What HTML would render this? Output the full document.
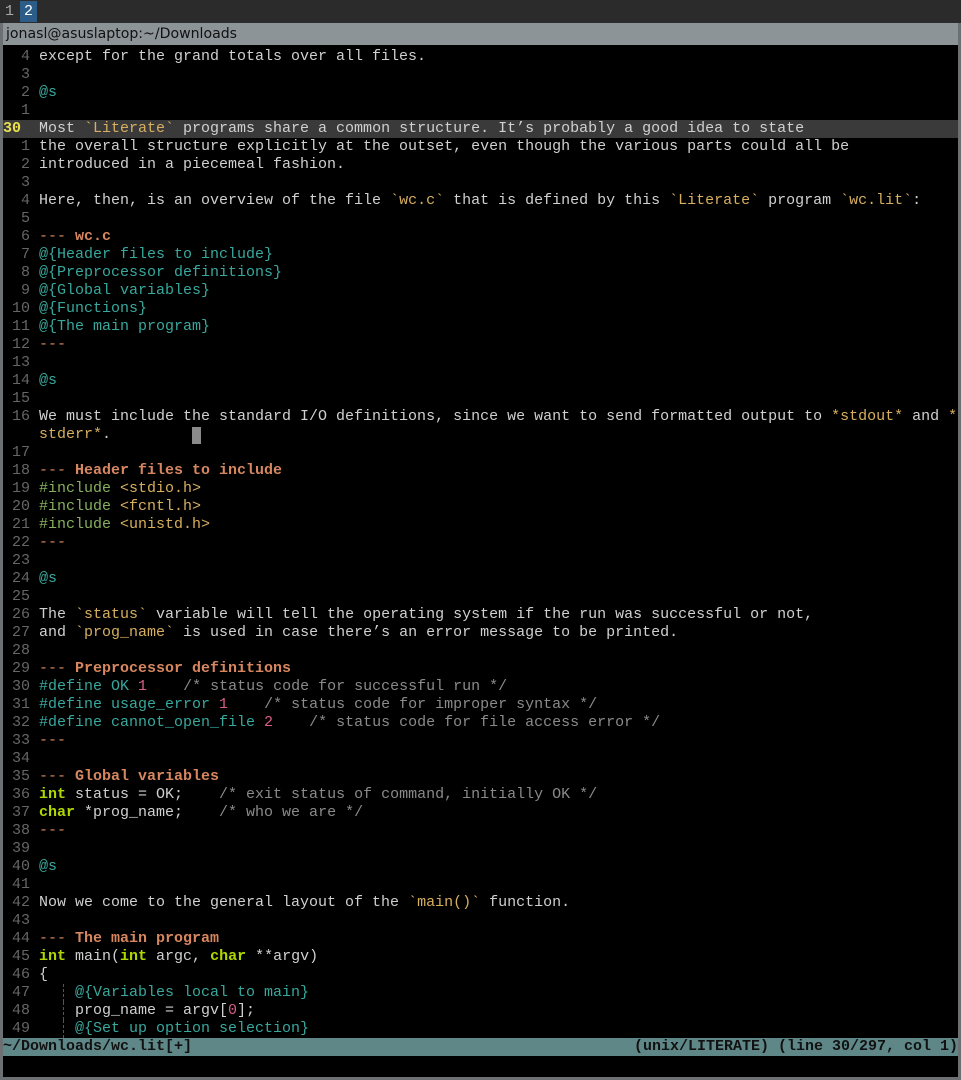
<!DOCTYPE html>
<html><head><meta charset="utf-8"><style>
body{margin:0;width:961px;height:1080px;background:#000;overflow:hidden;font-family:"Liberation Mono",monospace;font-size:15px;}
#tabs{position:absolute;left:0;top:0;width:961px;height:23px;background:#2b2b2b;}
.tab{position:absolute;top:1px;height:21px;width:17px;color:#aaa;font-family:"Liberation Mono",monospace;font-size:15px;line-height:21px;text-align:center}
#frame{position:absolute;left:0;top:23px;width:961px;height:1057px;background:#6c7073;}
#title{position:absolute;left:3px;top:23px;width:955px;height:22px;background:#8d9498;color:#111;font-family:"DejaVu Sans",sans-serif;font-size:14.1px;line-height:22px;padding-left:3px;box-sizing:border-box}
#term{position:absolute;left:3px;top:45px;width:955px;height:1032px;background:#000;}
#ed{position:absolute;left:3px;top:48px;width:955px;}
.l{height:18px;line-height:18px;white-space:pre;color:#d0d0d0;position:relative}
.n{display:inline-block;width:27px;text-align:right;color:#666;margin-right:9px}
.cur{background:#3a3a3a}
.cur .n{color:#e8e050;font-weight:bold;text-align:left;width:27px}
.s{color:#d7af5f}.t{color:#38a89d}.h{color:#d7875f;font-weight:bold}.d{color:#d7875f}
.g{color:#87af5f}.m{color:#d75f87}.c{color:#8a8a8a}.k{color:#afd700;font-weight:bold}.e{color:#d7af5f}
.ig{position:absolute;left:60px;top:0;height:18px;border-left:1px dashed #555}
#st{position:absolute;left:3px;top:1038px;width:955px;height:18px;line-height:18px;background:#5f8787;color:#111;font-weight:bold;white-space:pre;display:flex;justify-content:space-between}
#cursor{position:absolute;left:192px;top:427px;width:9px;height:17px;background:#8a8a8a}
</style></head><body>
<div id="tabs"><div class="tab" style="left:1px">1</div><div class="tab" style="left:20px;background:#2c5d88;color:#fff">2</div></div>
<div id="frame"></div>
<div id="title">jonasl@asuslaptop:~/Downloads</div>
<div id="term"></div>
<div id="ed">
<div class="l"><span class="n">4</span>except for the grand totals over all files.</div>
<div class="l"><span class="n">3</span></div>
<div class="l"><span class="n">2</span><span class="t">@s</span></div>
<div class="l"><span class="n">1</span></div>
<div class="l cur"><span class="n">30</span>Most <span class="s">`Literate`</span> programs share a common structure. It’s probably a good idea to state</div>
<div class="l"><span class="n">1</span>the overall structure explicitly at the outset, even though the various parts could all be</div>
<div class="l"><span class="n">2</span>introduced in a piecemeal fashion.</div>
<div class="l"><span class="n">3</span></div>
<div class="l"><span class="n">4</span>Here, then, is an overview of the file <span class="s">`wc.c`</span> that is defined by this <span class="s">`Literate`</span> program <span class="s">`wc.lit`</span>:</div>
<div class="l"><span class="n">5</span></div>
<div class="l"><span class="n">6</span><span class="d">--- </span><span class="h">wc.c</span></div>
<div class="l"><span class="n">7</span><span class="t">@{Header files to include}</span></div>
<div class="l"><span class="n">8</span><span class="t">@{Preprocessor definitions}</span></div>
<div class="l"><span class="n">9</span><span class="t">@{Global variables}</span></div>
<div class="l"><span class="n">10</span><span class="t">@{Functions}</span></div>
<div class="l"><span class="n">11</span><span class="t">@{The main program}</span></div>
<div class="l"><span class="n">12</span><span class="d">---</span></div>
<div class="l"><span class="n">13</span></div>
<div class="l"><span class="n">14</span><span class="t">@s</span></div>
<div class="l"><span class="n">15</span></div>
<div class="l"><span class="n">16</span>We must include the standard I/O definitions, since we want to send formatted output to <span class="e">*stdout*</span> and <span class="e">*</span></div>
<div class="l"><span class="n"></span><span class="e">stderr*</span>.</div>
<div class="l"><span class="n">17</span></div>
<div class="l"><span class="n">18</span><span class="d">--- </span><span class="h">Header files to include</span></div>
<div class="l"><span class="n">19</span><span class="g">#include </span><span class="s">&lt;stdio.h&gt;</span></div>
<div class="l"><span class="n">20</span><span class="g">#include </span><span class="s">&lt;fcntl.h&gt;</span></div>
<div class="l"><span class="n">21</span><span class="g">#include </span><span class="s">&lt;unistd.h&gt;</span></div>
<div class="l"><span class="n">22</span><span class="d">---</span></div>
<div class="l"><span class="n">23</span></div>
<div class="l"><span class="n">24</span><span class="t">@s</span></div>
<div class="l"><span class="n">25</span></div>
<div class="l"><span class="n">26</span>The <span class="s">`status`</span> variable will tell the operating system if the run was successful or not,</div>
<div class="l"><span class="n">27</span>and <span class="s">`prog_name`</span> is used in case there’s an error message to be printed.</div>
<div class="l"><span class="n">28</span></div>
<div class="l"><span class="n">29</span><span class="d">--- </span><span class="h">Preprocessor definitions</span></div>
<div class="l"><span class="n">30</span><span class="t">#define OK </span><span class="m">1</span>    <span class="c">/* status code for successful run */</span></div>
<div class="l"><span class="n">31</span><span class="t">#define usage_error </span><span class="m">1</span>    <span class="c">/* status code for improper syntax */</span></div>
<div class="l"><span class="n">32</span><span class="t">#define cannot_open_file </span><span class="m">2</span>    <span class="c">/* status code for file access error */</span></div>
<div class="l"><span class="n">33</span><span class="d">---</span></div>
<div class="l"><span class="n">34</span></div>
<div class="l"><span class="n">35</span><span class="d">--- </span><span class="h">Global variables</span></div>
<div class="l"><span class="n">36</span><span class="k">int</span> status = OK;    <span class="c">/* exit status of command, initially OK */</span></div>
<div class="l"><span class="n">37</span><span class="k">char</span> *prog_name;    <span class="c">/* who we are */</span></div>
<div class="l"><span class="n">38</span><span class="d">---</span></div>
<div class="l"><span class="n">39</span></div>
<div class="l"><span class="n">40</span><span class="t">@s</span></div>
<div class="l"><span class="n">41</span></div>
<div class="l"><span class="n">42</span>Now we come to the general layout of the <span class="s">`main()`</span> function.</div>
<div class="l"><span class="n">43</span></div>
<div class="l"><span class="n">44</span><span class="d">--- </span><span class="h">The main program</span></div>
<div class="l"><span class="n">45</span><span class="k">int</span> main(<span class="k">int</span> argc, <span class="k">char</span> **argv)</div>
<div class="l"><span class="n">46</span>{</div>
<div class="l"><span class="n">47</span><span class="ig"></span>    <span class="t">@{Variables local to main}</span></div>
<div class="l"><span class="n">48</span><span class="ig"></span>    prog_name = argv[<span class="m">0</span>];</div>
<div class="l"><span class="n">49</span><span class="ig"></span>    <span class="t">@{Set up option selection}</span></div>
</div>
<div id="cursor"></div>
<div id="st"><span>~/Downloads/wc.lit[+]</span><span>(unix/LITERATE) (line 30/297, col 1)</span></div>
</body></html>
